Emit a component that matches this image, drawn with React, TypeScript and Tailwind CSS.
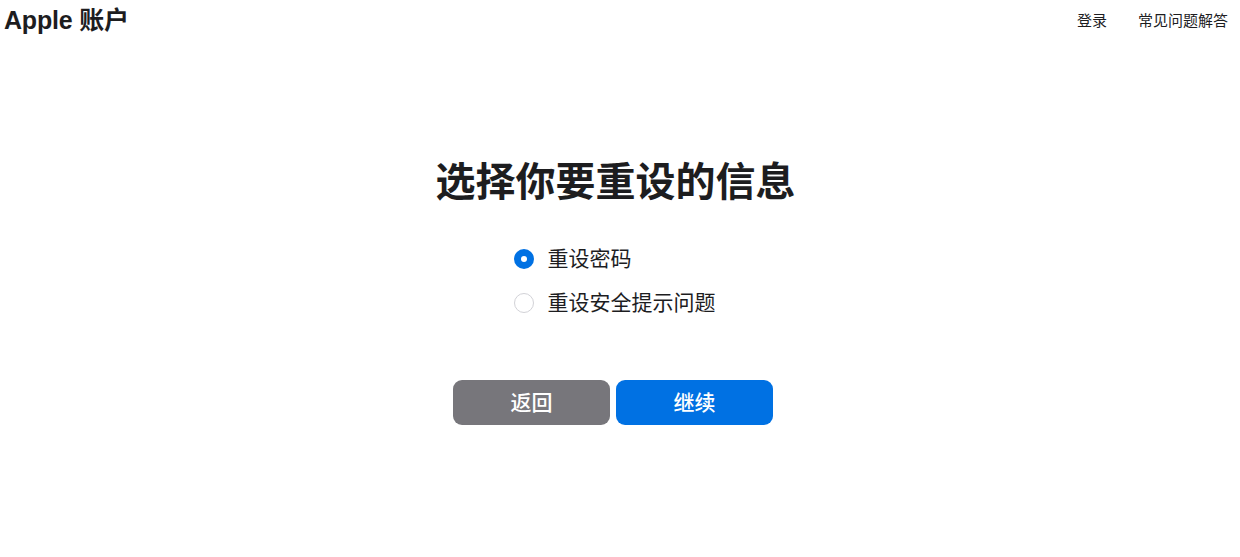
import { useState } from "react";

const font = { fontFamily: '"Liberation Sans", "Noto Sans CJK SC", sans-serif' };

function Radio({ checked, label, onClick }: { checked: boolean; label: string; onClick: () => void }) {
  return (
    <button type="button" onClick={onClick} className="flex items-center gap-[14px] h-[44px] text-left">
      <span
        className={
          checked
            ? "w-[20px] h-[20px] rounded-full bg-[#0071e3] flex items-center justify-center"
            : "w-[20px] h-[20px] rounded-full border border-[#d2d2d7] bg-white"
        }
      >
        {checked && <span className="w-[6px] h-[6px] rounded-full bg-white" />}
      </span>
      <span className="text-[21px] text-[#1d1d1f]">{label}</span>
    </button>
  );
}

export default function App() {
  const [choice, setChoice] = useState(0);

  return (
    <div className="min-h-screen bg-white text-[#1d1d1f]" style={font}>
      <header className="flex items-center justify-between h-[42px] pl-[4px] pr-[12px]">
        <h1 className="text-[25px] font-bold tracking-[-0.2px]">Apple 账户</h1>
        <nav className="flex items-center gap-[31px] text-[15px]">
          <a href="#">登录</a>
          <a href="#">常见问题解答</a>
        </nav>
      </header>

      <main className="flex flex-col items-center pr-[11px] pt-[112px]">
        <h2 className="text-[40px] font-bold leading-[56px] ml-[2px]">选择你要重设的信息</h2>

        <div className="flex flex-col mt-[27px]">
          <Radio checked={choice === 0} label="重设密码" onClick={() => setChoice(0)} />
          <Radio checked={choice === 1} label="重设安全提示问题" onClick={() => setChoice(1)} />
        </div>

        <div className="flex gap-[6px] mt-[55px] mr-[3px]">
          <button className="w-[157px] h-[45px] rounded-[9px] bg-[#77767b] text-white text-[21px] font-medium">返回</button>
          <button className="w-[157px] h-[45px] rounded-[9px] bg-[#0071e3] text-white text-[21px] font-medium">继续</button>
        </div>
      </main>
    </div>
  );
}
